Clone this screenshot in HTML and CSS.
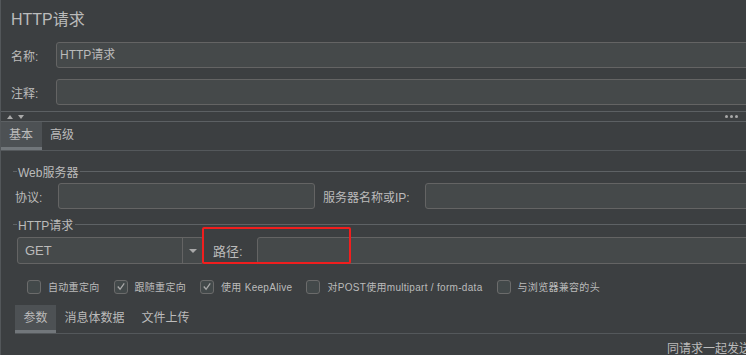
FILE: index.html
```html
<!DOCTYPE html>
<html lang="zh-CN">
<head>
<meta charset="UTF-8">
<title>HTTP请求</title>
<link rel="stylesheet" href="styles.css">
</head>
<body>
<div class="page">
    <!-- Title -->
    <div class="title">HTTP请求</div>

    <div class="field-row">
        <label class="label">名称:</label>
        <div class="input">HTTP请求</div>
    </div>
    <div class="field-row">
        <label class="label">注释:</label>
        <div class="input"></div>
    </div>

    <!-- Splitter -->
    <div class="splitter">
        <span class="arrow up"></span>
        <span class="arrow down"></span>
        <span class="dots"><i></i><i></i><i></i></span>
    </div>

    <!-- Tabs -->
    <div class="tabs top-tabs">
        <div class="tab active">基本</div>
        <div class="tab">高级</div>
    </div>

    <!-- Web server -->
    <div class="group-title"><span>Web服务器</span></div>
    <div class="server-row">
        <label class="label">协议:</label>
        <div class="input protocol"></div>
        <label class="label host-label">服务器名称或IP:</label>
        <div class="input"></div>
    </div>

    <!-- HTTP request -->
    <div class="group-title"><span>HTTP请求</span></div>
    <div class="request-row">
        <div class="combo">
            <span class="combo-text">GET</span>
            <span class="combo-btn"><span class="caret"></span></span>
        </div>
        <label class="label path-label">路径:</label>
        <div class="input"></div>
        <div class="highlight"></div>
    </div>

    <!-- Options -->
    <div class="options">
        <div class="check"><span class="box"></span>自动重定向</div>
        <div class="check"><span class="box checked"><svg width="13" height="13" viewBox="0 0 13 13"><polyline points="3,6.5 5.5,9.5 10,3" fill="none" stroke="#a9a9a9" stroke-width="1.4"/></svg></span>跟随重定向</div>
        <div class="check"><span class="box checked"><svg width="13" height="13" viewBox="0 0 13 13"><polyline points="3,6.5 5.5,9.5 10,3" fill="none" stroke="#a9a9a9" stroke-width="1.4"/></svg></span>使用 KeepAlive</div>
        <div class="check"><span class="box"></span>对POST使用multipart / form-data</div>
        <div class="check"><span class="box"></span>与浏览器兼容的头</div>
    </div>

    <!-- Parameter tabs -->
    <div class="tabs bottom-tabs">
        <div class="tab active">参数</div>
        <div class="tab">消息体数据</div>
        <div class="tab">文件上传</div>
    </div>

    <div class="table-head">
        <span>同请求一起发送</span>
    </div>
</div>
</body>
</html>
```

FILE: styles.css
```css
body {
    margin: 0;
    background-color: #3c3f41;
    color: #bbbbbb;
    font-family: 'Liberation Sans', 'Noto Sans CJK SC', sans-serif;
    font-size: 12px;
    overflow: hidden;
}

.page {
    width: 760px;
    height: 355px;
    border-left: 1px solid #53575a;
    position: relative;
}

.title {
    height: 42px;
    line-height: 40px;
    padding-left: 10px;
    font-size: 16px;
}

.field-row {
    display: flex;
    align-items: center;
    padding-left: 10px;
    margin-bottom: 11px;
}

.field-row .label {
    width: 45px;
}

.input {
    flex: 1;
    height: 26px;
    box-sizing: border-box;
    border: 1px solid #646464;
    border-radius: 3px;
    background-color: #45494a;
    padding-left: 3px;
    line-height: 24px;
    font-size: 12px;
}

/* Splitter */
.splitter {
    margin-top: -5px;
    height: 9px;
    border-top: 1px solid #5c6063;
    border-bottom: 1px solid #5c6063;
    display: flex;
    align-items: center;
    padding-left: 6px;
}

.arrow {
    width: 0;
    height: 0;
    border-left: 3px solid transparent;
    border-right: 3px solid transparent;
    margin-right: 5px;
}

.arrow.up {
    border-bottom: 4px solid #a9a9a9;
}

.arrow.down {
    border-top: 4px solid #a9a9a9;
}

.dots {
    display: flex;
    gap: 2px;
    margin-left: 696px;
}

.dots i {
    width: 3px;
    height: 3px;
    border-radius: 50%;
    background-color: #a9a9a9;
}

/* Tabs */
.tabs {
    display: flex;
    height: 28px;
    border-bottom: 1px solid #54585b;
}

.tab {
    padding: 0 8px;
    line-height: 27px;
    font-size: 12px;
}

.tab.active {
    background-color: #4d5154;
    box-shadow: inset 0 -3px 0 #72777b;
}

.top-tabs .tab.active {
    width: 25px;
}

/* Titled groups */
.group-title {
    display: flex;
    align-items: center;
    height: 16px;
    margin-top: 12px;
    padding-left: 12px;
    font-size: 12px;
}

.group-title::before {
    content: '';
    width: 4px;
    border-top: 1px solid #5e6265;
}

.group-title::after {
    content: '';
    flex: 1;
    border-top: 1px solid #5e6265;
}

.group-title span {
    padding: 0 2px 0 1px;
}

.server-row {
    display: flex;
    align-items: center;
    padding-left: 14px;
    margin-top: 4px;
}

.server-row .label {
    width: 43px;
}

.server-row .protocol {
    flex: none;
    width: 257px;
}

.server-row .host-label {
    width: 102px;
    margin-left: 8px;
}

.server-row + .group-title {
    margin-top: 7px;
}

.request-row {
    display: flex;
    align-items: center;
    padding-left: 16px;
    margin-top: 5px;
    position: relative;
}

.combo {
    display: flex;
    width: 187px;
    height: 27px;
    box-sizing: border-box;
    border: 1px solid #646464;
    border-radius: 3px;
    background-color: #45494a;
}

.combo-text {
    flex: 1;
    padding-left: 7px;
    line-height: 25px;
    font-size: 13px;
}

.combo-btn {
    width: 20px;
    border-left: 1px solid #646464;
    display: flex;
    align-items: center;
    justify-content: center;
}

.caret {
    width: 0;
    height: 0;
    border-left: 4px solid transparent;
    border-right: 4px solid transparent;
    border-top: 4px solid #a9a9a9;
}

.request-row .path-label {
    width: 44px;
    margin-left: 9px;
    font-size: 13px;
}

.request-row .input {
    height: 27px;
}

/* Red annotation box */
.highlight {
    position: absolute;
    left: 201px;
    top: -10px;
    width: 149px;
    height: 37px;
    box-sizing: border-box;
    border: 2px solid #f01e1e;
    border-radius: 2px;
}

/* Checkboxes */
.options {
    display: flex;
    align-items: center;
    gap: 14px;
    padding-left: 26px;
    margin-top: 15px;
    font-size: 10px;
    letter-spacing: 0.3px;
}

.check {
    display: flex;
    align-items: center;
}

.box {
    width: 14px;
    height: 14px;
    box-sizing: border-box;
    border: 1px solid #6b6b6b;
    border-radius: 3px;
    background-color: #43494a;
    margin-right: 7px;
    display: flex;
    align-items: center;
    justify-content: center;
}

.box svg {
    display: block;
}

.bottom-tabs {
    margin-top: 11px;
    margin-left: 14px;
}

.bottom-tabs .tab {
    padding: 0 8.5px;
}

.table-head {
    display: flex;
    justify-content: flex-end;
    padding-right: 10px;
    margin-top: 5px;
    font-size: 12px;
}
```
